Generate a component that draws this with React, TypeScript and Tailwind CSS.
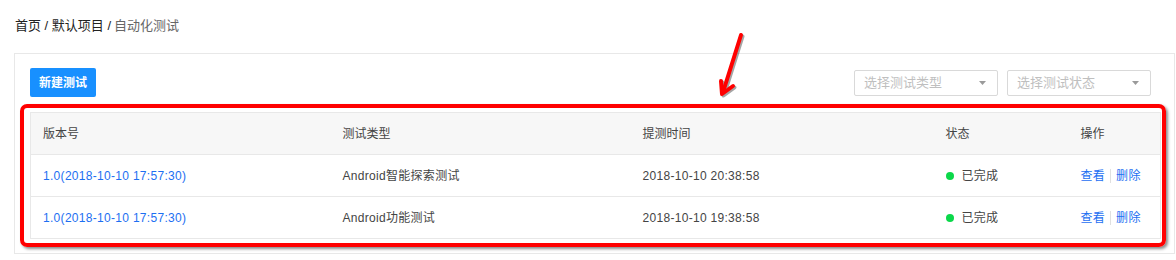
import * as React from "react"

type Row = { version: string; type: string; time: string; status: string }

const rows: Row[] = [
  { version: "1.0(2018-10-10 17:57:30)", type: "Android智能探索测试", time: "2018-10-10 20:38:58", status: "已完成" },
  { version: "1.0(2018-10-10 17:57:30)", type: "Android功能测试", time: "2018-10-10 19:38:58", status: "已完成" },
]

const font = { fontFamily: '"Helvetica Neue", "Liberation Sans", "Noto Sans CJK SC", sans-serif' }

function SelectBox({ placeholder }: { placeholder: string }) {
  return (
    <div className="flex h-[26px] w-[144px] items-center justify-between rounded-[2px] border border-[#d9d9d9] bg-white pl-[9px] pr-[11px]">
      <span className="text-[13px] text-[#bfbfbf]">{placeholder}</span>
      <svg width="7" height="4" viewBox="0 0 7 4">
        <path d="M0 0h7L3.5 4z" fill="#9a9a9a" />
      </svg>
    </div>
  )
}

export default function App() {
  return (
    <main className="relative h-[260px] w-[1176px] overflow-hidden bg-white" style={font}>
      {/* Breadcrumb */}
      <div className="flex h-[52px] items-center pb-[1px] pl-[15px] text-[13px]">
        <span className="text-[#222]">首页 / 默认项目 / </span>
        <span className="ml-[3px] text-[#666]">自动化测试</span>
      </div>

      {/* Card */}
      <div className="ml-[14px] mt-[1px] w-[1161px] border border-[#e8e8e8] px-[15px] pb-[14px] pt-[14px]">
        <div className="flex items-center justify-between">
          <button className="h-[29px] rounded-[2px] bg-[#1890ff] px-[9px] text-[12px] font-bold text-white">
            新建测试
          </button>
          <div className="mr-[8px] flex gap-[9px]">
            <SelectBox placeholder="选择测试类型" />
            <SelectBox placeholder="选择测试状态" />
          </div>
        </div>

        <table className="mt-[15px] w-[1131px] table-fixed border-collapse border border-[#e8e8e8] text-[12px] text-[#444]">
          <colgroup>
            <col className="w-[300px]" />
            <col className="w-[300px]" />
            <col className="w-[303px]" />
            <col className="w-[135px]" />
            <col />
          </colgroup>
          <thead>
            <tr className="h-[42px] bg-[#f7f7f7] text-left">
              <th className="px-[12px] font-normal">版本号</th>
              <th className="px-[12px] font-normal">测试类型</th>
              <th className="px-[12px] font-normal">提测时间</th>
              <th className="px-[12px] font-normal">状态</th>
              <th className="px-[12px] font-normal">操作</th>
            </tr>
          </thead>
          <tbody className="tracking-[0.3px]">
            {rows.map((r, i) => (
              <tr key={i} className="h-[42px] border-t border-[#e8e8e8]">
                <td className="px-[12px] text-[#1d6ff2]">{r.version}</td>
                <td className="px-[12px]">{r.type}</td>
                <td className="px-[12px]">{r.time}</td>
                <td className="px-[12px]">
                  <span className="flex items-center gap-[8px]">
                    <span className="size-[8px] rounded-full bg-[#0bd84a]" />
                    {r.status}
                  </span>
                </td>
                <td className="px-[12px] text-[#1d6ff2]">
                  <span className="flex items-center">
                    查看
                    <span className="mx-[5px] h-[14px] w-px bg-[#e0e0e0]" />
                    删除
                  </span>
                </td>
              </tr>
            ))}
          </tbody>
        </table>
      </div>

      {/* Red annotation box */}
      <div className="pointer-events-none absolute left-[20px] top-[104px] h-[143px] w-[1146px] rounded-[7px] border-[4px] border-[#ff0000] shadow-[2px_2px_3px_rgba(0,0,0,0.45)]" />

      {/* Red annotation arrow */}
      <svg className="pointer-events-none absolute left-[700px] top-[25px]" width="60" height="80" viewBox="0 0 60 80">
        <g transform="translate(1.5 1.5)" opacity="0.35">
          <path d="M41 10 L24 64" stroke="#000" strokeWidth="4" strokeLinecap="round" />
          <path d="M21 56 L22 69 L33 61" stroke="#000" strokeWidth="4" fill="none" strokeLinecap="round" strokeLinejoin="round" />
        </g>
        <path d="M41 10 L24 64" stroke="#ff0000" strokeWidth="4" strokeLinecap="round" />
        <path d="M21 56 L22 69 L33 61" stroke="#ff0000" strokeWidth="4" fill="none" strokeLinecap="round" strokeLinejoin="round" />
      </svg>
    </main>
  )
}
